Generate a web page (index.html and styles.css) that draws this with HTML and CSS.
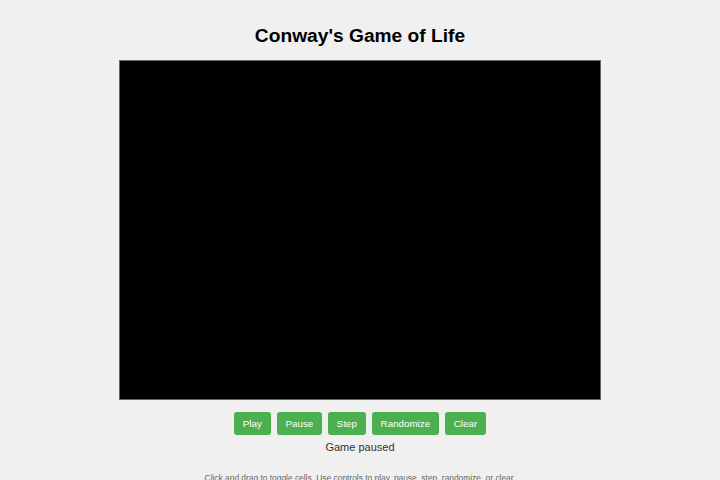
FILE: index.html
```html
<!DOCTYPE html>
<html lang="en">
<head>
<meta charset="utf-8">
<title>Conway's Game of Life</title>
<link rel="stylesheet" href="styles.css">
</head>
<body>
<main class="app">
  <h1 class="title">Conway's Game of Life</h1>
  <div class="board" aria-label="Game board"></div>
  <div class="controls">
    <button class="btn">Play</button>
    <button class="btn">Pause</button>
    <button class="btn">Step</button>
    <button class="btn">Randomize</button>
    <button class="btn">Clear</button>
  </div>
  <p class="status">Game paused</p>
  <p class="help">Click and drag to toggle cells. Use controls to play, pause, step, randomize, or clear.</p>
</main>
</body>
</html>
```
FILE: styles.css
```css
html, body {
  margin: 0;
  padding: 0;
  background: #f0f0f0;
  font-family: "Liberation Sans", Arial, sans-serif;
  overflow: hidden;
}
.app {
  display: flex;
  flex-direction: column;
  align-items: center;
  padding-top: 25px;
}
.title {
  margin: 0;
  font-size: 19.2px;
  line-height: 22px;
  font-weight: bold;
  color: #000;
}
.board {
  margin-top: 13px;
  width: 480px;
  height: 338px;
  background: #000;
  border: 1px solid #666;
}
.controls {
  margin-top: 12px;
  display: flex;
  gap: 6px;
}
.btn {
  font-family: "Liberation Sans", Arial, sans-serif;
  font-size: 9.8px;
  line-height: 11px;
  padding: 6px 8.8px;
  background: #4caf50;
  color: #fff;
  border: none;
  border-radius: 3px;
}
.status {
  margin: 6px 0 0;
  font-size: 11px;
  line-height: 13px;
  color: #333;
}
.help {
  margin: 19px 0 0;
  font-size: 8.4px;
  line-height: 10px;
  color: #666;
}
```
